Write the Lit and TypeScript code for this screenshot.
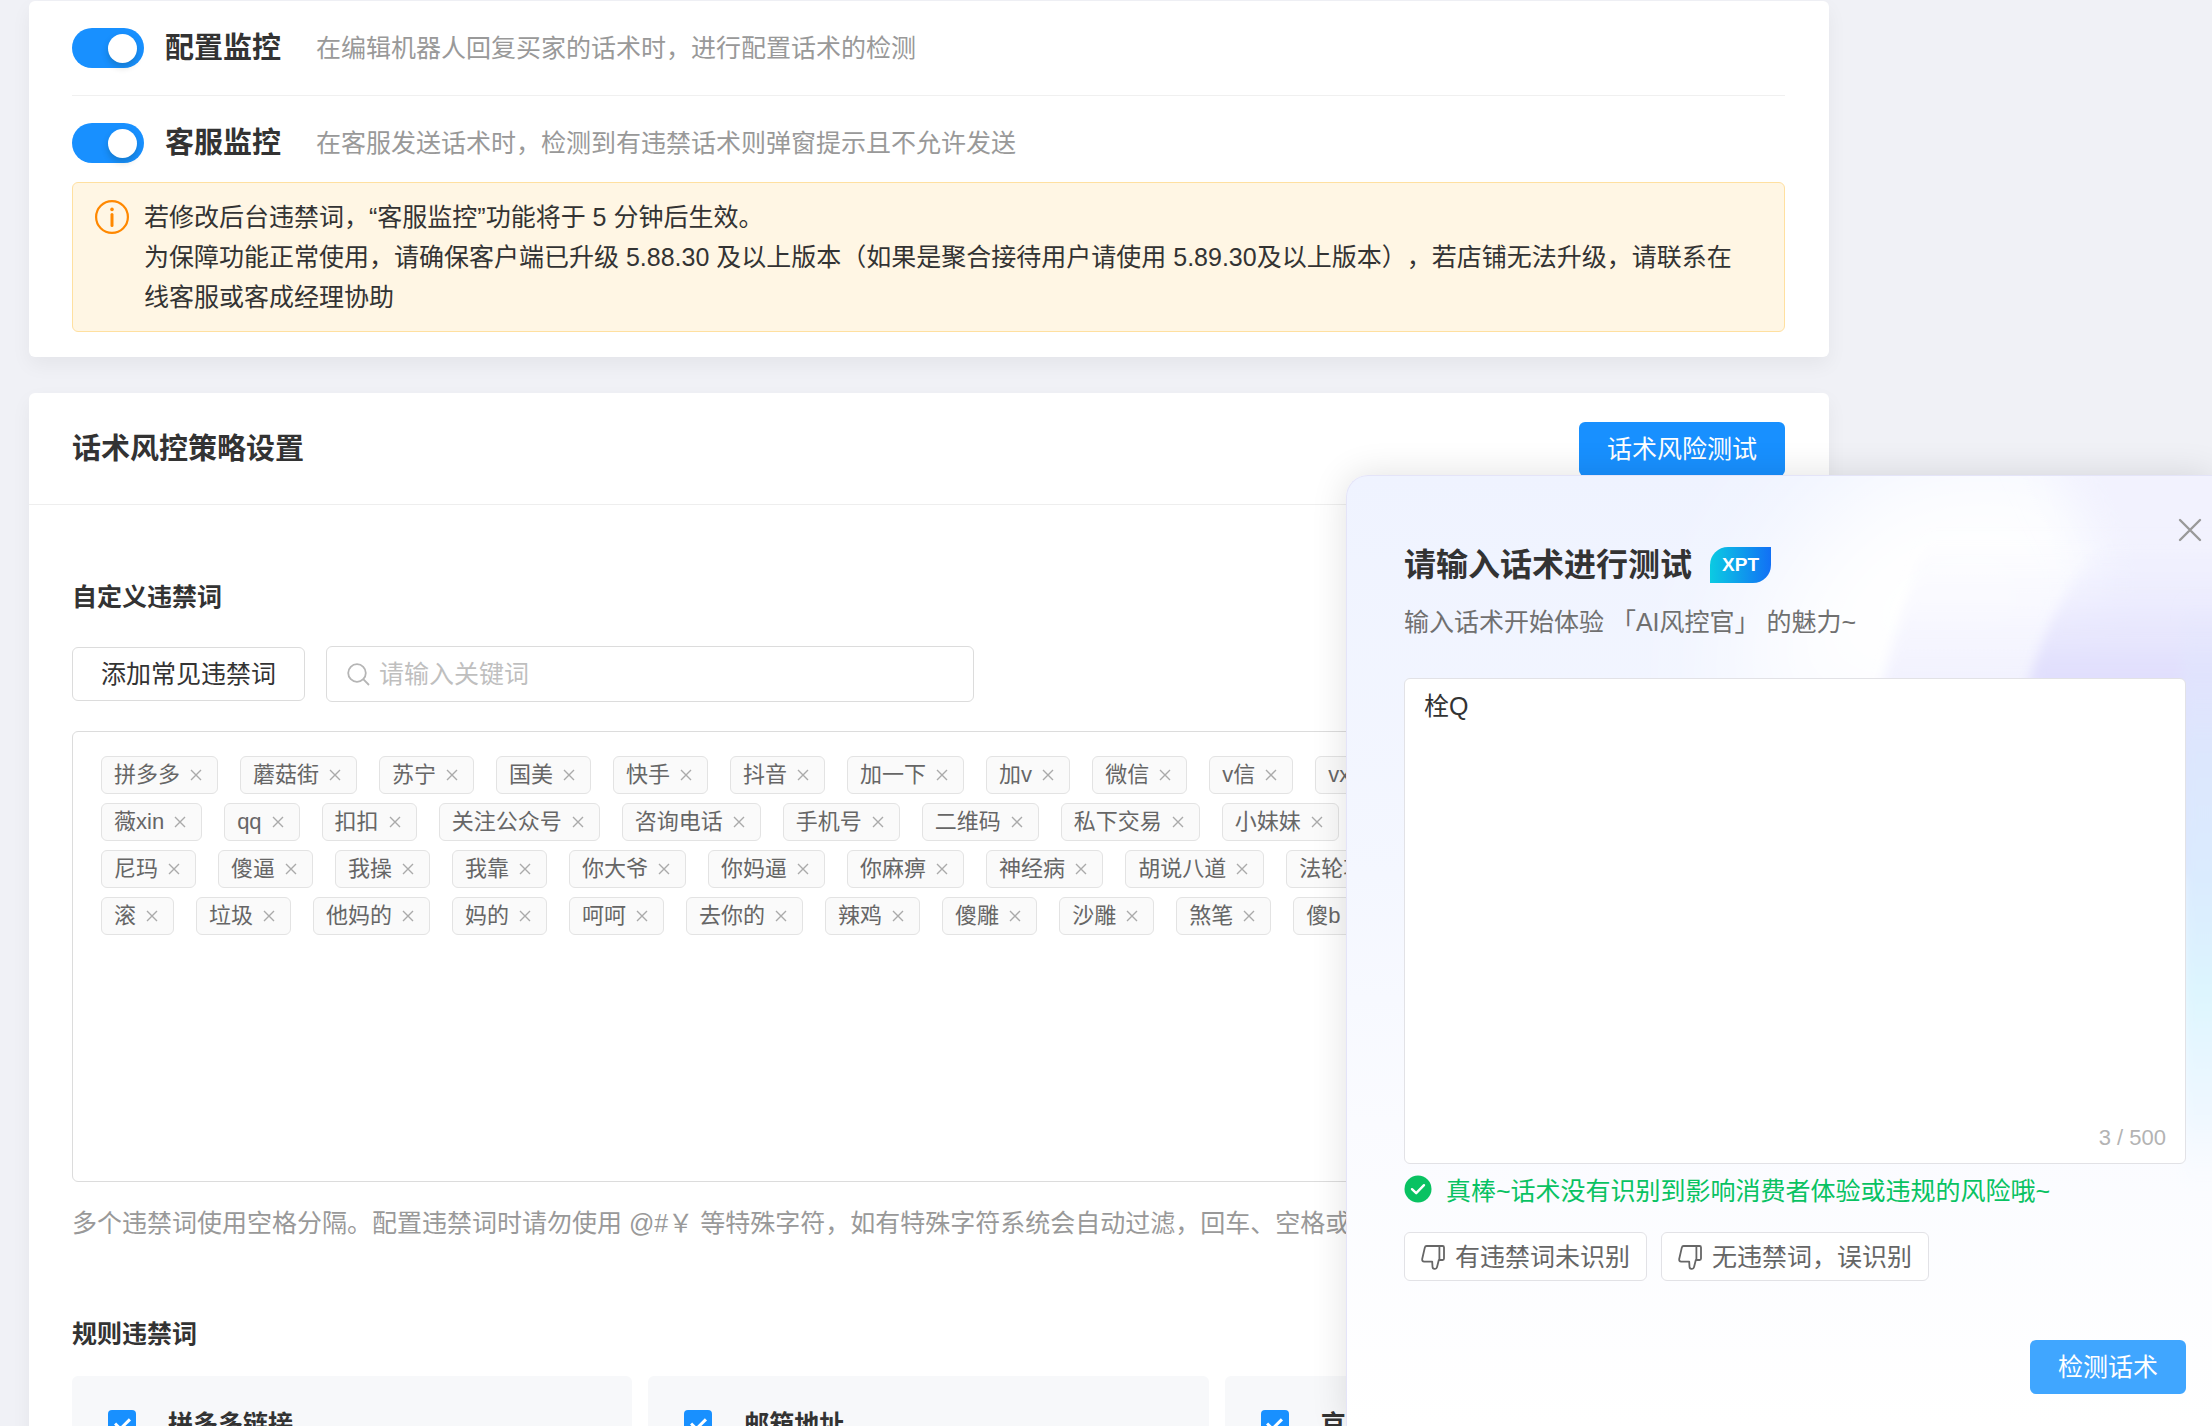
import { LitElement, html, css, svg } from "lit";
import { customElement, property } from "lit/decorators.js";

const fontStack = css`"Liberation Sans", "Noto Sans CJK SC", sans-serif`;

const tagRows: string[][] = [
  ["拼多多", "蘑菇街", "苏宁", "国美", "快手", "抖音", "加一下", "加v", "微信", "v信", "vx"],
  ["薇xin", "qq", "扣扣", "关注公众号", "咨询电话", "手机号", "二维码", "私下交易", "小妹妹"],
  ["尼玛", "傻逼", "我操", "我靠", "你大爷", "你妈逼", "你麻痹", "神经病", "胡说八道", "法轮功"],
  ["滚", "垃圾", "他妈的", "妈的", "呵呵", "去你的", "辣鸡", "傻雕", "沙雕", "煞笔", "傻b"],
];

const rules = ["拼多多链接", "邮箱地址", "京东链接"];

const crossPath = svg`<path d="M1 1 L11 11 M11 1 L1 11" />`;

const thumbDown = html`<svg class="thumb" viewBox="0 0 24 26" aria-hidden="true">
  <path d="M5.6 2H21.6Q23 2 23 3.4V14.6Q23 16 21.6 16H17.8L16 23.2Q15.7 24.8 14.1 24.8H13.4Q11.6 24.8 11.5 22.8L11.2 17.6H3.2Q.8 17.4 1.2 15L3.8 3.6Q4.2 2 5.6 2Z M18.4 2V15.6" />
</svg>`;

@customElement("word-tag")
export class WordTag extends LitElement {
  @property() word = "";

  static styles = css`
    :host {
      display: flex;
      flex: none;
      align-items: center;
      box-sizing: border-box;
      height: 38px;
      padding: 0 0 0 12px;
      border: 1px solid #e3e3e3;
      border-radius: 6px;
      background: #fafafa;
      color: #666;
      font: 22px/36px ${fontStack};
    }
    .remove {
      display: flex;
      padding: 10px 15px 10px 10px;
      border: 0;
      background: none;
    }
    .cross {
      width: 12px;
      height: 12px;
      fill: none;
      stroke: #aaa;
      stroke-width: 1.4;
    }
  `;

  render() {
    return html`<span>${this.word}</span
      ><button class="remove" aria-label=${`删除${this.word}`}>
        <svg class="cross" viewBox="0 0 12 12">${crossPath}</svg>
      </button>`;
  }
}

@customElement("monitor-switch")
export class MonitorSwitch extends LitElement {
  @property() name = "";
  @property() description = "";

  static styles = css`
    :host {
      display: block;
      font: 25px/40px ${fontStack};
    }
    .row {
      display: flex;
      align-items: center;
    }
    .toggle {
      appearance: none;
      flex: none;
      display: flex;
      align-items: center;
      justify-content: flex-end;
      box-sizing: border-box;
      width: 72px;
      height: 40px;
      margin: 0;
      padding: 0 7px;
      border-radius: 20px;
      background: #1890ff;
    }
    .toggle::before {
      content: "";
      width: 29px;
      height: 29px;
      border-radius: 50%;
      background: #fff;
      box-shadow: 0 4px 7px rgba(0, 35, 11, 0.2);
    }
    .toggle:not(:checked) {
      justify-content: flex-start;
      background: #bfbfbf;
    }
    .name {
      margin-left: 21px;
      font-size: 29px;
      font-weight: 700;
      color: #333;
    }
    .desc {
      margin-left: 35px;
      color: #999;
    }
  `;

  render() {
    return html`<div class="row">
      <input class="toggle" type="checkbox" role="switch" id="switch" checked />
      <label class="name" for="switch">${this.name}</label>
      <span class="desc">${this.description}</span>
    </div>`;
  }
}

@customElement("risk-test-panel")
export class RiskTestPanel extends LitElement {
  static styles = css`
    :host {
      display: block;
      box-sizing: border-box;
      overflow: hidden;
      padding: 69px 26px 32px 57px;
      border: 1px solid #e4e4f8;
      border-right: 0;
      border-bottom: 0;
      border-top-left-radius: 22px;
      background: linear-gradient(180deg, #eff3ff 0%, #f4f7ff 42%, #fafbff 68%, #fff 100%);
      box-shadow: 0 0 36px rgba(0, 0, 0, 0.12);
      color: #333;
      font: 25px/40px ${fontStack};
    }
    .glow {
      position: absolute;
      inset: 0;
      width: 100%;
      height: 100%;
    }
    .content {
      position: relative;
      display: flex;
      flex-direction: column;
    }
    .close {
      position: absolute;
      top: 42px;
      right: 10px;
      display: flex;
      padding: 0;
      border: 0;
      background: none;
    }
    .close-icon {
      width: 24px;
      height: 24px;
      fill: none;
      stroke: #999;
      stroke-width: 1.2;
      stroke-linecap: round;
    }
    .heading {
      display: flex;
      align-items: center;
      gap: 18px;
    }
    .title {
      margin: 0;
      font-size: 32px;
      line-height: 40px;
    }
    .badge {
      width: 61px;
      border-radius: 18px 0 18px 0;
      background: linear-gradient(90deg, #0bcbe2, #1270f5);
      color: #fff;
      font-size: 19px;
      font-weight: 700;
      line-height: 36px;
      text-align: center;
    }
    .subtitle {
      margin: 17px 0 36px;
      color: #707070;
    }
    .field {
      position: relative;
      display: flex;
    }
    .text {
      flex: 1;
      box-sizing: border-box;
      height: 486px;
      padding: 7px 19px;
      border: 1px solid #e2e2e6;
      border-radius: 6px;
      background: #fff;
      color: #333;
      font: inherit;
      resize: none;
      outline: none;
    }
    .counter {
      position: absolute;
      right: 20px;
      bottom: 6px;
      color: #b3b3b3;
      font-size: 22px;
    }
    .status {
      display: flex;
      align-items: center;
      gap: 14px;
      margin: 7px 0 21px;
      color: #09c262;
    }
    .status-icon {
      width: 28px;
      height: 28px;
      margin-bottom: 4px;
    }
    .feedback {
      display: flex;
      gap: 14px;
    }
    .report {
      display: flex;
      align-items: center;
      gap: 10px;
      padding: 0 16px;
      height: 49px;
      box-sizing: border-box;
      border: 1px solid #e2e2e6;
      border-radius: 6px;
      background: #fff;
      color: #666;
      font: inherit;
    }
    .thumb {
      width: 24px;
      height: 26px;
      fill: none;
      stroke: #666;
      stroke-width: 1.8;
      stroke-linejoin: round;
    }
    .submit {
      align-self: flex-end;
      height: 54px;
      margin-top: 59px;
      padding: 0 28px;
      border: 0;
      border-radius: 6px;
      background: #40a6ff;
      color: #fff;
      font: inherit;
    }
  `;

  render() {
    return html`
      <svg class="glow" viewBox="0 0 866 951" preserveAspectRatio="none" aria-hidden="true">
        <defs>
          <filter id="soft" x="-60%" y="-60%" width="220%" height="220%">
            <feGaussianBlur stdDeviation="60" />
          </filter>
          <filter id="haze" x="-60%" y="-60%" width="220%" height="220%">
            <feGaussianBlur stdDeviation="24" />
          </filter>
          <filter id="edge" x="-20%" y="-20%" width="140%" height="140%">
            <feGaussianBlur stdDeviation="6" />
          </filter>
          <linearGradient id="lilac" x1="0" y1="0" x2="0" y2="1">
            <stop offset="0.1" stop-color="#f3f3fe" stop-opacity="0" />
            <stop offset="0.5" stop-color="#f1f1fe" />
          </linearGradient>
          <linearGradient id="violet" x1="0" y1="0" x2="0" y2="1">
            <stop offset="0.05" stop-color="#e8e8fd" stop-opacity="0" />
            <stop offset="0.42" stop-color="#e1dffd" />
          </linearGradient>
          <linearGradient id="side" x1="0" y1="0" x2="0" y2="1">
            <stop offset="0" stop-color="#e4e8fd" stop-opacity="0" />
            <stop offset="0.24" stop-color="#dde6fd" />
            <stop offset="0.46" stop-color="#daebfe" />
            <stop offset="0.64" stop-color="#ddf5fe" />
            <stop offset="0.85" stop-color="#f0f8ff" />
            <stop offset="1" stop-color="#fcfdff" stop-opacity="0" />
          </linearGradient>
        </defs>
        <path d="M390 260 Q400 60 560 -20 H780 L760 260Z" fill="#ffffff" filter="url(#soft)" />
        <path d="M690 -60 L760 90 L740 260 H940 V-60Z" fill="#f2f2fe" filter="url(#haze)" />
        <path d="M536 210 Q562 100 600 20 H900 V400 H536Z" fill="url(#lilac)" filter="url(#edge)" />
        <path d="M682 210 Q700 130 770 50 H900 V400 H682Z" fill="url(#violet)" filter="url(#edge)" />
        <rect x="836" y="120" width="60" height="620" fill="url(#side)" filter="url(#edge)" />
      </svg>
      <button class="close" aria-label="关闭">
        <svg class="close-icon" viewBox="0 0 12 12">${crossPath}</svg>
      </button>
      <div class="content">
        <div class="heading">
          <h2 class="title">请输入话术进行测试</h2>
          <span class="badge">XPT</span>
        </div>
        <div class="subtitle">输入话术开始体验 「AI风控官」 的魅力~</div>
        <div class="field">
          <textarea class="text" aria-label="请输入话术进行测试" maxlength="500" .value=${"栓Q"}></textarea>
          <span class="counter">3 / 500</span>
        </div>
        <div class="status" role="status">
          <svg class="status-icon" viewBox="0 0 28 28" aria-hidden="true">
            <circle cx="14" cy="14" r="13.5" fill="#09c262" />
            <path d="M8 14.2 L12.2 18.2 L20 10.2" fill="none" stroke="#fff" stroke-width="2.4" stroke-linecap="round" stroke-linejoin="round" />
          </svg>
          <span>真棒~话术没有识别到影响消费者体验或违规的风险哦~</span>
        </div>
        <div class="feedback">
          <button class="report">${thumbDown}<span>有违禁词未识别</span></button>
          <button class="report">${thumbDown}<span>无违禁词，误识别</span></button>
        </div>
        <button class="submit">检测话术</button>
      </div>
    `;
  }
}

@customElement("app-root")
export class AppRoot extends LitElement {
  static styles = css`
    :host {
      display: block;
      position: relative;
      box-sizing: border-box;
      height: 100vh;
      overflow: hidden;
      padding: 1px 383px 0 29px;
      background: #f0f1f6;
      color: #333;
      font: 25px/40px ${fontStack};
    }
    .card {
      margin-bottom: 36px;
      border-radius: 6px;
      background: #fff;
      box-shadow: 0 8px 20px rgba(0, 0, 0, 0.05);
    }
    .monitors {
      padding: 0 44px 25px 43px;
    }
    .monitor {
      padding: 27px 0;
    }
    .monitor.last {
      padding-bottom: 19px;
      border-top: 1px solid #f0f0f0;
    }
    .alert {
      display: flex;
      align-items: flex-start;
      gap: 15px;
      padding: 14px 34px 14px 22px;
      border: 1px solid #ffe0a0;
      border-radius: 6px;
      background: #fff6e4;
      text-spacing-trim: space-all;
    }
    .alert-icon {
      flex: none;
      width: 34px;
      height: 34px;
      margin-top: 3px;
    }
    .alert-text {
      margin: 0;
    }
    .card-header {
      display: flex;
      align-items: center;
      justify-content: space-between;
      padding: 29px 44px 28px 43px;
      border-bottom: 1px solid #eee;
    }
    .card-title {
      margin: 0;
      font-size: 29px;
    }
    .button {
      height: 54px;
      padding: 0 28px;
      border: 0;
      border-radius: 6px;
      background: #1890ff;
      color: #fff;
      font: inherit;
      white-space: nowrap;
    }
    .button.plain {
      border: 1px solid #dcdcdc;
      background: #fff;
      color: #333;
    }
    .card-body {
      padding: 72px 44px 40px 43px;
    }
    .section-title {
      margin: 0;
      font-size: 25px;
    }
    .toolbar {
      display: flex;
      align-items: center;
      gap: 21px;
      margin: 29px 0;
    }
    .search {
      display: flex;
      align-items: center;
      gap: 9px;
      box-sizing: border-box;
      width: 648px;
      height: 56px;
      padding: 0 20px;
      border: 1px solid #dcdcdc;
      border-radius: 6px;
    }
    .search-icon {
      flex: none;
      width: 23px;
      height: 23px;
      fill: none;
      stroke: #b5b5b5;
      stroke-width: 1.8;
    }
    .search-input {
      flex: 1;
      min-width: 0;
      padding: 0;
      border: 0;
      outline: none;
      background: none;
      color: #333;
      font: inherit;
    }
    .search-input::placeholder {
      color: #bfbfbf;
    }
    .words {
      display: flex;
      flex-direction: column;
      gap: 9px;
      box-sizing: border-box;
      min-height: 451px;
      padding: 24px 28px;
      border: 1px solid #dcdcdc;
      border-radius: 6px;
    }
    .word-row {
      display: flex;
      gap: 22px;
    }
    .hint {
      margin: 21px 0 71px;
      color: #999;
      white-space: nowrap;
      overflow: hidden;
    }
    .rules {
      display: grid;
      grid-template-columns: repeat(3, 1fr);
      gap: 16px;
      margin-top: 22px;
    }
    .rule {
      display: flex;
      align-items: center;
      gap: 32px;
      padding: 28px 36px;
      border-radius: 6px;
      background: #f7f8fa;
      font-weight: 700;
    }
    .check {
      appearance: none;
      display: grid;
      place-items: center;
      width: 28px;
      height: 28px;
      margin: 0;
      border-radius: 4px;
      background: #1890ff;
    }
    .check::after {
      content: "";
      width: 6px;
      height: 12px;
      margin-bottom: 4px;
      border: solid #fff;
      border-width: 0 3px 3px 0;
      transform: rotate(45deg);
    }
    .panel {
      position: absolute;
      top: 475px;
      right: 0;
      bottom: 0;
      width: 866px;
    }
  `;

  render() {
    return html`
      <section class="card monitors" lang="zh-CN">
        <div class="monitor">
          <monitor-switch name="配置监控" description="在编辑机器人回复买家的话术时，进行配置话术的检测"></monitor-switch>
        </div>
        <div class="monitor last">
          <monitor-switch name="客服监控" description="在客服发送话术时，检测到有违禁话术则弹窗提示且不允许发送"></monitor-switch>
        </div>
        <div class="alert">
          <svg class="alert-icon" viewBox="0 0 34 34" aria-hidden="true">
            <circle cx="17" cy="17" r="15.9" fill="none" stroke="#ff8800" stroke-width="2.2" />
            <circle cx="17" cy="9.4" r="1.8" fill="#ff8800" />
            <path d="M17 14.4V25.4" stroke="#ff8800" stroke-width="3" stroke-linecap="round" />
          </svg>
          <p class="alert-text">
            若修改后台违禁词，“客服监控”功能将于 5 分钟后生效。<br />为保障功能正常使用，请确保客户端已升级 5.88.30
            及以上版本（如果是聚合接待用户请使用 5.89.30及以上版本），若店铺无法升级，请联系在线客服或客成经理协助
          </p>
        </div>
      </section>
      <section class="card" lang="zh-CN">
        <header class="card-header">
          <h2 class="card-title">话术风控策略设置</h2>
          <button class="button">话术风险测试</button>
        </header>
        <div class="card-body">
          <h3 class="section-title">自定义违禁词</h3>
          <div class="toolbar">
            <button class="button plain">添加常见违禁词</button>
            <label class="search">
              <svg class="search-icon" viewBox="0 0 23 23" aria-hidden="true">
                <circle cx="10" cy="10" r="8.8" />
                <path d="M16.2 16.2L22 22" />
              </svg>
              <input class="search-input" type="text" placeholder="请输入关键词" aria-label="请输入关键词" />
            </label>
          </div>
          <div class="words">
            ${tagRows.map(
              (row) => html`<div class="word-row">${row.map((word) => html`<word-tag .word=${word}></word-tag>`)}</div>`,
            )}
          </div>
          <p class="hint">
            多个违禁词使用空格分隔。配置违禁词时请勿使用 @#￥ 等特殊字符，如有特殊字符系统会自动过滤，回车、空格或
          </p>
          <h3 class="section-title">规则违禁词</h3>
          <div class="rules">
            ${rules.map(
              (rule) => html`<label class="rule"><input class="check" type="checkbox" checked /><span>${rule}</span></label>`,
            )}
          </div>
        </div>
      </section>
      <risk-test-panel class="panel" lang="zh-CN"></risk-test-panel>
    `;
  }
}
